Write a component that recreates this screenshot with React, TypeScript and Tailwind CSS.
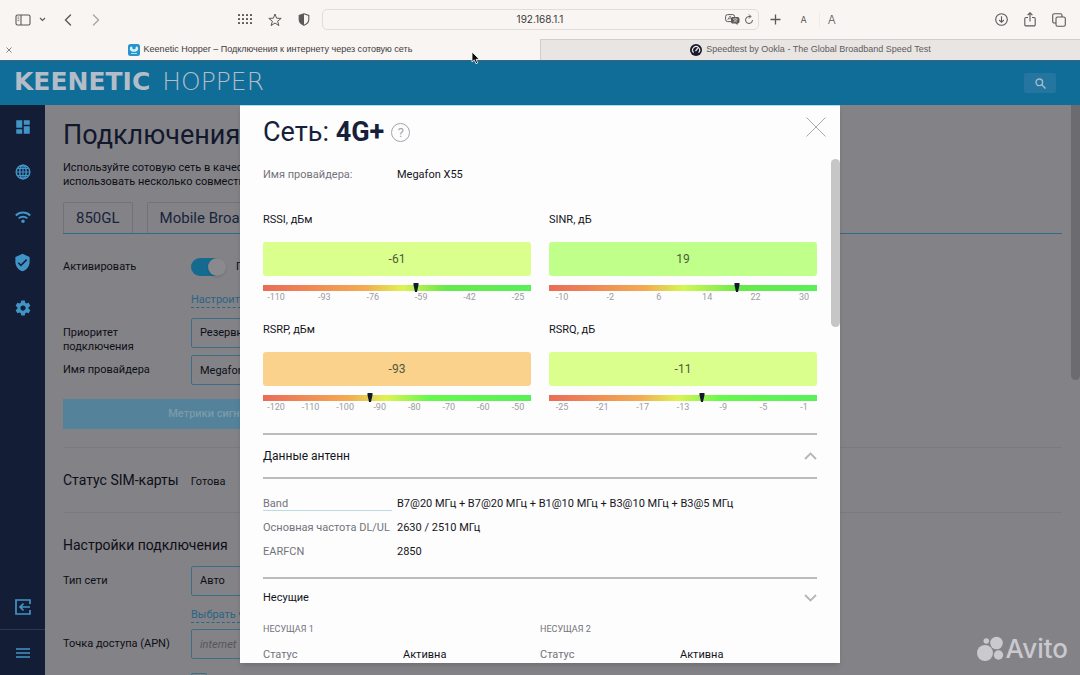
import React from 'react';

interface Metric {
  name: string;
  value: string;
  tone: string;
  marker: number;
  ticks: string[];
  scale: string;
}

const metrics: Metric[] = [
  {
    name: 'RSSI, дБм',
    value: '-61',
    tone: 'bg-[#dbff8c]',
    marker: 57,
    ticks: ['-110', '-93', '-76', '-59', '-42', '-25'],
    scale: 'bg-[linear-gradient(90deg,#ea6b57_0%,#f3ab52_38%,#dff254_52%,#67e84c_68%,#58f058_100%)]',
  },
  {
    name: 'SINR, дБ',
    value: '19',
    tone: 'bg-[#c0ff89]',
    marker: 70,
    ticks: ['-10', '-2', '6', '14', '22', '30'],
    scale: 'bg-[linear-gradient(90deg,#ea6b57_0%,#f3ab52_36%,#d3f752_50%,#67e84c_72%,#58f058_100%)]',
  },
  {
    name: 'RSRP, дБм',
    value: '-93',
    tone: 'bg-[#fbd28c]',
    marker: 40,
    ticks: ['-120', '-110', '-100', '-90', '-80', '-70', '-60', '-50'],
    scale: 'bg-[linear-gradient(90deg,#ea6b57_0%,#f3ab52_32%,#dff254_46%,#67f84c_62%,#58f058_100%)]',
  },
  {
    name: 'RSRQ, дБ',
    value: '-11',
    tone: 'bg-[#dbff8c]',
    marker: 57,
    ticks: ['-25', '-21', '-17', '-13', '-9', '-5', '-1'],
    scale: 'bg-[linear-gradient(90deg,#ea6b57_0%,#f3ab52_34%,#dff254_48%,#67f84c_64%,#58f058_100%)]',
  },
];

const antenna = [
  { label: 'Band', value: 'B7@20 МГц + B7@20 МГц + B1@10 МГц + B3@10 МГц + B3@5 МГц', hint: true },
  { label: 'Основная частота DL/UL', value: '2630 / 2510 МГц', hint: false },
  { label: 'EARFCN', value: '2850', hint: false },
];

const iconButton = 'flex shrink-0 items-center justify-center';
const field =
  'block h-[30px] w-full appearance-none rounded-[2px] border border-[#3c6f87] bg-transparent px-2 text-[11px] text-[#0d0e16]';

const BrowserToolbar: React.FC = () => (
  <div className="grid h-[39px] grid-cols-[1fr_437px_1fr] items-center text-[#5b5858]">
    <div className="flex items-center justify-between pr-3 pl-[15px]">
      <div className="flex items-center">
        <button aria-label="Боковая панель" className={iconButton}>
          <svg width="16" height="12" viewBox="0 0 16 12" fill="none" stroke="currentColor">
            <rect x="1" y="1" width="14" height="10" rx="1.5" strokeWidth="1.1" />
            <path d="M6 1v10" strokeWidth="1.1" />
            <path d="M2.5 3h1.8M2.5 4.8h1.8M2.5 6.6h1.8" strokeWidth=".7" />
          </svg>
        </button>
        <button aria-label="Группы вкладок" className={`${iconButton} ml-2`}>
          <svg width="7" height="5" viewBox="0 0 7 5" fill="none" stroke="currentColor" strokeWidth="1.1">
            <path d="M1 1l2.5 2.5L6 1" />
          </svg>
        </button>
        <button aria-label="Назад" className={`${iconButton} ml-[18px]`}>
          <svg width="8" height="12" viewBox="0 0 8 12" fill="none" stroke="currentColor" strokeWidth="1.4" strokeLinecap="round">
            <path d="M6.5 1L1.5 6l5 5" />
          </svg>
        </button>
        <button aria-label="Вперёд" className={`${iconButton} ml-5 text-[#aaa6a5]`}>
          <svg width="8" height="12" viewBox="0 0 8 12" fill="none" stroke="currentColor" strokeWidth="1.4" strokeLinecap="round">
            <path d="M1.5 1l5 5-5 5" />
          </svg>
        </button>
      </div>
      <div className="flex items-center gap-4">
        <button aria-label="Начальная страница" className={iconButton}>
          <svg width="14" height="11" viewBox="0 0 14 11" fill="currentColor">
            {[0, 4, 8, 12].map(x => [0, 4, 8].map(y => <rect key={`${x}-${y}`} x={x} y={y} width="2" height="2" rx=".6" />))}
          </svg>
        </button>
        <button aria-label="Избранное" className={iconButton}>
          <svg width="14" height="14" viewBox="0 0 14 14" fill="none" stroke="currentColor" strokeWidth="1" strokeLinejoin="round">
            <path d="M7 1l1.6 4.2 4.6.2-3.6 2.8 1.3 4.4L7 10l-3.9 2.6 1.3-4.4L.8 5.4l4.6-.2z" />
          </svg>
        </button>
        <button aria-label="Отчёт о конфиденциальности" className={iconButton}>
          <svg width="12" height="13" viewBox="0 0 12 13">
            <path d="M6 .8l4.8 1.7v4c0 2.6-2 4.6-4.8 5.8C3.2 11.1 1.2 9.1 1.2 6.5v-4z" fill="none" stroke="currentColor" strokeWidth="1.1" />
            <path d="M6 .8L1.2 2.5v4c0 2.6 2 4.6 4.8 5.8z" fill="currentColor" />
          </svg>
        </button>
      </div>
    </div>
    <div className="relative flex h-[21px] items-center rounded-[5px] border border-[#e2dddb] px-1">
      <input
        aria-label="Адрес"
        defaultValue="192.168.1.1"
        className="w-full min-w-0 bg-transparent text-center text-[10px] text-[#3a3838] outline-none"
      />
      <div className="absolute right-1 flex items-center gap-1">
        <button aria-label="Перевести" className={iconButton}>
          <svg width="15" height="11" viewBox="0 0 15 11">
            <rect x=".6" y=".6" width="9" height="7" rx="2" fill="none" stroke="currentColor" />
            <path d="M2.6 6L5 2l2 4M3.5 4.7h3" fill="none" stroke="currentColor" strokeWidth=".7" />
            <path d="M7.5 3h5a2 2 0 012 2v2.5a2 2 0 01-2 2v1.5l-2-1.5h-3a1.500 1.500 0 01-1.500-1.500V4.500A1.500 1.500 0 017.500 3z" fill="currentColor" />
            <path d="M8 5h4.500M10.200 4v1M12 5c-.6 1.600-2 2.500-3.500 3M8.800 5.500c.8 1.200 2 2 3.200 2.500" fill="none" stroke="#f9f5f2" strokeWidth=".6" />
          </svg>
        </button>
        <button aria-label="Обновить" className={iconButton}>
          <svg width="10" height="11" viewBox="0 0 10 11" fill="none" stroke="currentColor" strokeWidth="1">
            <path d="M8.500 6A3.500 3.500 0 115 2.500h1.500M5 .5l2 2-2 2" />
          </svg>
        </button>
      </div>
    </div>
    <div className="flex items-center justify-between pr-[14px] pl-[11px]">
      <div className="flex items-center">
        <button aria-label="Новая вкладка" className={iconButton}>
          <svg width="11" height="11" viewBox="0 0 11 11" stroke="currentColor" strokeWidth="1.3">
            <path d="M5.500 .5v10M.5 5.500h10" />
          </svg>
        </button>
        <button className="ml-5 text-[9px]">A</button>
        <span className="ml-3 h-4 w-px bg-[#efebe8]" />
        <button className="ml-2 text-[12px] font-light">A</button>
      </div>
      <div className="flex items-center gap-4">
        <button aria-label="Загрузки" className={iconButton}>
          <svg width="13" height="13" viewBox="0 0 13 13" fill="none" stroke="currentColor" strokeWidth="1.1">
            <circle cx="6.5" cy="6.5" r="5.8" />
            <path d="M6.500 3.200v6M4.200 7l2.300 2.300L8.800 7" />
          </svg>
        </button>
        <button aria-label="Поделиться" className={iconButton}>
          <svg width="12" height="15" viewBox="0 0 12 15" fill="none" stroke="currentColor" strokeWidth="1.1">
            <path d="M4 5.500H2A1.200 1.200 0 00.8 6.700v6A1.200 1.200 0 002 13.900h8a1.200 1.200 0 001.200-1.200v-6A1.200 1.200 0 0010 5.500H8M6 9.500V1M3.600 3.200L6 .8l2.400 2.400" />
          </svg>
        </button>
        <button aria-label="Обзор вкладок" className={iconButton}>
          <svg width="14" height="14" viewBox="0 0 14 14" fill="none" stroke="currentColor" strokeWidth="1.1">
            <rect x="4" y="4" width="9.3" height="9.3" rx="1.5" />
            <path d="M4 10H2.200A1.500 1.500 0 01.7 8.500V2.200A1.500 1.500 0 012.200.7h6.300A1.500 1.500 0 0110 2.200V4" />
          </svg>
        </button>
      </div>
    </div>
  </div>
);

const BrowserTabs: React.FC = () => (
  <div className="grid h-[21px] grid-cols-2 font-['Liberation_Sans',sans-serif] text-[9px]">
    <div className="relative flex items-center justify-center gap-1 text-[#3f3c3c]">
      <button aria-label="Закрыть вкладку" className="absolute left-[6px] text-[#7a7675]">
        <svg width="6" height="6" viewBox="0 0 6 6" stroke="currentColor" strokeWidth=".9">
          <path d="M.5 .5l5 5M5.500 .5l-5 5" />
        </svg>
      </button>
      <svg width="12" height="12" viewBox="0 0 12 12">
        <rect width="12" height="12" rx="2.5" fill="#2795cc" />
        <path d="M2 3.500c1-1.800 2.400-1 2.400.3 0 1 .7 1.500 1.600 1.500s1.600-.5 1.600-1.500c0-1.300 1.400-2.100 2.400-.3.600 2-.5 3.700-2.300 4.200H4.300C2.500 7.200 1.400 5.500 2 3.500z" fill="#d4f0fb" />
        <path d="M3 9.500h6" stroke="#a9def4" />
      </svg>
      <span>Keenetic Hopper – Подключения к интернету через сотовую сеть</span>
    </div>
    <div className="flex items-center justify-center gap-1 border-t border-l border-[#d2cecb] bg-[#e9e5e3] text-[#5f5c5b]">
      <svg width="12" height="12" viewBox="0 0 12 12">
        <circle cx="6" cy="6" r="6" fill="#181a2c" />
        <path d="M3.600 8.600a3.500 3.500 0 115 0" fill="none" stroke="#e9e5e3" strokeWidth="1.2" />
        <path d="M5.500 7L8 4" stroke="#e9e5e3" strokeWidth="1.2" />
      </svg>
      <span>Speedtest by Ookla - The Global Broadband Speed Test</span>
    </div>
  </div>
);

const Sidebar: React.FC = () => (
  <nav className="flex w-[45px] shrink-0 flex-col justify-between bg-[#131d36] text-[#4194c6]">
    <div className="flex flex-col items-center gap-[27px] pt-[13px]">
      <a href="#dashboard" aria-label="Системный монитор">
        <svg width="18" height="18" viewBox="0 0 24 24" fill="currentColor">
          <path d="M3 13h8V3H3v10zm0 8h8v-6H3v6zm10 0h8V11h-8v10zm0-18v6h8V3h-8z" />
        </svg>
      </a>
      <a href="#internet" aria-label="Интернет">
        <svg width="18" height="18" viewBox="0 0 18 18" fill="none" stroke="currentColor" strokeWidth="1.5">
          <circle cx="9" cy="9" r="6.8" />
          <ellipse cx="9" cy="9" rx="3.2" ry="6.8" />
          <path d="M9 2v14M2 9h14M3.200 5.500h11.600M3.200 12.500h11.600" strokeWidth="1.2" />
        </svg>
      </a>
      <a href="#wifi" aria-label="Мои сети и Wi-Fi">
        <svg width="18" height="18" viewBox="0 0 18 18" fill="none" stroke="currentColor" strokeWidth="2">
          <path d="M1.800 7.500c4-4 10.400-4 14.400 0M4.700 10.400c2.400-2.300 6.200-2.300 8.600 0" />
          <circle cx="9" cy="13.3" r="1.7" fill="currentColor" stroke="none" />
        </svg>
      </a>
      <a href="#security" aria-label="Сетевые правила">
        <svg width="19" height="19" viewBox="0 0 24 24" fill="currentColor">
          <path d="M12 1L3 5v6c0 5.550 3.840 10.740 9 12 5.160-1.260 9-6.450 9-12V5l-9-4zm-2 16l-4-4 1.410-1.410L10 14.170l6.590-6.590L18 9l-8 8z" />
        </svg>
      </a>
      <a href="#management" aria-label="Управление">
        <svg width="18" height="18" viewBox="0 0 24 24" fill="currentColor">
          <path d="M19.430 12.980c.04-.32.07-.64.07-.98s-.03-.66-.07-.98l2.110-1.650c.19-.15.24-.42.12-.64l-2-3.460c-.12-.22-.39-.3-.61-.22l-2.490 1c-.52-.4-1.080-.73-1.690-.98l-.38-2.650A.49.49 0 0014 2h-4c-.25 0-.46.18-.49.42l-.38 2.650c-.61.25-1.170.59-1.690.98l-2.490-1c-.23-.09-.49 0-.61.22l-2 3.460c-.13.22-.07.49.12.64l2.110 1.650c-.04.32-.07.65-.07.98s.03.66.07.98l-2.110 1.650c-.19.15-.24.42-.12.64l2 3.460c.12.22.39.3.61.22l2.490-1c.52.4 1.080.73 1.690.98l.38 2.650c.03.24.24.42.49.42h4c.25 0 .46-.18.49-.42l.38-2.650c.61-.25 1.170-.59 1.690-.98l2.490 1c.23.09.49 0 .61-.22l2-3.460c.12-.22.07-.49-.12-.64l-2.110-1.650zM12 15.500c-1.930 0-3.500-1.570-3.500-3.500s1.570-3.500 3.500-3.500 3.500 1.570 3.500 3.500-1.570 3.500-3.500 3.500z" />
        </svg>
      </a>
    </div>
    <div className="flex flex-col">
      <a href="#logout" aria-label="Выход" className="flex h-[45px] items-center justify-center border-b border-[#26394f]">
        <svg width="16" height="16" viewBox="0 0 16 16" fill="none" stroke="currentColor" strokeWidth="1.7">
          <path d="M15 5V1H1v14h14v-4M15 8H5.500M8.500 4.500L5 8l3.500 3.500" />
        </svg>
      </a>
      <button aria-label="Меню" className="flex h-[45px] items-center justify-center">
        <svg width="14" height="10" viewBox="0 0 14 10" stroke="currentColor" strokeWidth="1.5">
          <path d="M0 1h14M0 5h14M0 9h14" />
        </svg>
      </button>
    </div>
  </nav>
);

const ConnectionPage: React.FC = () => (
  <main className="min-w-0 flex-1 overflow-hidden bg-[#838287] px-[18px] text-[11px] leading-[14px] text-[#0d0e16]">
    <h1 className="pt-3 text-[27px] leading-9 whitespace-nowrap text-[#11182c]">Подключения</h1>
    <p className="mt-2 whitespace-nowrap">
      Используйте сотовую сеть в качестве
      <br />
      использовать несколько совместимых
    </p>

    <div className="mt-3 flex h-[33px] gap-[14px] border-b border-[#2f6c8c] pt-[1px] text-[15px] text-[#18243c]">
      <button className="rounded-t-[2px] border border-b-0 border-[#6f737d] px-3">850GL</button>
      <button className="rounded-t-[2px] border border-b-0 border-[#6f737d] px-3">Mobile Broadband</button>
    </div>

    <div className="mt-[19px] flex items-center">
      <label htmlFor="activate" className="w-32">Активировать</label>
      <span className="relative flex h-[28px] w-[45px] items-center">
        <input id="activate" type="checkbox" defaultChecked className="peer h-[18px] w-[34px] appearance-none rounded-full bg-[#156a90]" />
        <span className="pointer-events-none absolute left-[17px] h-[18px] w-[18px] rounded-full bg-[#8a898e] shadow" />
      </span>
      <span>Подключено</span>
    </div>
    <a href="#schedule" className="mt-3 ml-32 inline-block border-b border-dashed border-[#2b6584] text-[#2b6584]">
      Настроить
    </a>

    <div className="mt-[10px] flex w-[300px] items-start">
      <label htmlFor="priority" className="w-32 pt-2 pr-8">Приоритет подключения</label>
      <div className="flex-1">
        <select id="priority" className={field}>
          <option>Резервное</option>
        </select>
      </div>
    </div>
    <div className="mt-[1px] flex w-[300px] items-center">
      <label htmlFor="provider" className="w-32">Имя провайдера</label>
      <div className="flex-1">
        <input id="provider" defaultValue="Megafon X55" className={field} />
      </div>
    </div>
    <button className="mt-[14px] h-[30px] w-[300px] bg-[#53829a] text-[11px] font-medium text-[#7b9aac]">Метрики сигнала</button>

    <section className="mt-[18px] flex items-baseline gap-3 border-t border-[#7b7a80] pt-[25px]">
      <h2 className="text-[14px]">Статус SIM-карты</h2>
      <span>Готова</span>
    </section>

    <section className="mt-[23px] border-t border-[#7b7a80] pt-[25px]">
      <h2 className="text-[14px]">Настройки подключения</h2>
      <div className="mt-[14px] flex w-[300px] items-center">
        <label htmlFor="network" className="w-32">Тип сети</label>
        <div className="flex-1">
          <select id="network" className={field}>
            <option>Авто</option>
          </select>
        </div>
      </div>
      <a href="#bands" className="mt-3 ml-32 inline-block border-b border-dashed border-[#2b6584] text-[#2b6584]">
        Выбрать частоты
      </a>
      <div className="mt-[6px] flex w-[300px] items-center">
        <label htmlFor="apn" className="w-32">Точка доступа (APN)</label>
        <div className="flex-1">
          <input id="apn" placeholder="internet" className={`${field} placeholder:text-[#56555c] placeholder:italic`} />
        </div>
      </div>
      <input type="checkbox" aria-label="Роуминг" className="mt-[14px] ml-32 block h-4 w-4 appearance-none rounded-[2px] border border-[#3c6f87]" />
    </section>
  </main>
);

const MetricGauge: React.FC<{ metric: Metric }> = ({ metric }) => (
  <div className="flex flex-col">
    <h3 className="text-[11px] leading-4">{metric.name}</h3>
    <div className={`mt-[14px] flex h-[34px] items-center justify-center rounded-[3px] text-[12px] text-[#4f5a3f] ${metric.tone}`}>
      {metric.value}
    </div>
    <div className={`relative mt-[9px] h-[6px] ${metric.scale}`}>
      <svg
        className="absolute -top-[2px] -translate-x-1/2"
        style={{ left: `${metric.marker}%` }}
        width="6"
        height="9"
        viewBox="0 0 6 9"
      >
        <path d="M.5 0h5v2L4 9H2L.5 2z" fill="#121a2c" />
      </svg>
    </div>
    <div className="flex justify-between text-[9px] leading-[12px] text-[#9b9b9f]">
      {metric.ticks.map(tick => (
        <span key={tick} className="w-[26px] text-center">{tick}</span>
      ))}
    </div>
  </div>
);

const SignalDialog: React.FC = () => (
  <div
    role="dialog"
    aria-label="Сеть: 4G+"
    className="relative mx-auto h-full w-[600px] overflow-hidden border-t border-[#a9def4] bg-[#fdfdfd] px-[23px] text-[11px] leading-4 text-[#14151c] shadow-md"
  >
    <div className="flex items-start justify-between">
      <h1 className="flex items-center gap-[7px] pt-[8px] text-[27px] leading-9 text-[#17203a]">
        <span>Сеть: <b>4G+</b></span>
        <button aria-label="Справка" className="flex h-[19px] w-[19px] items-center justify-center rounded-full border border-[#a5a5a9] text-[13px] leading-none text-[#a5a5a9]">
          ?
        </button>
      </h1>
      <button aria-label="Закрыть" className="-mr-[9px] pt-[11px]">
        <svg width="20" height="20" viewBox="0 0 20 20" stroke="#a9a9ac" strokeWidth="1">
          <path d="M.5 .5l19 19M19.500 .5l-19 19" />
        </svg>
      </button>
    </div>
    <span className="absolute top-[53px] right-0 h-[168px] w-[9px] rounded-full bg-[#c6c6c6]" />

    <dl className="mt-[17px] flex">
      <dt className="w-[134px] text-[#73737c]">Имя провайдера:</dt>
      <dd>Megafon X55</dd>
    </dl>

    <div className="mt-[29px] grid grid-cols-2 gap-x-[18px] gap-y-[19px]">
      {metrics.map(metric => (
        <MetricGauge key={metric.name} metric={metric} />
      ))}
    </div>

    <section className="mt-[20px] border-t-2 border-[#bcbcbe]">
      <button className="flex h-[42px] w-full items-center justify-between text-[12px]">
        <span>Данные антенн</span>
        <svg width="13" height="8" viewBox="0 0 13 8" fill="none" stroke="#b5b5b8" strokeWidth="1.8">
          <path d="M1 7l5.500-5.500L12 7" />
        </svg>
      </button>
      <dl className="flex flex-col gap-2 border-t-2 border-[#bcbcbe] pt-[17px] pb-[17px]">
        {antenna.map(row => (
          <div key={row.label} className="flex">
            <dt className="w-[134px] shrink-0 pr-[5px] whitespace-nowrap text-[#73737c]">
              {row.hint ? <span className="block h-[15px] border-b border-[#bcd9e6]">{row.label}</span> : row.label}
            </dt>
            <dd>{row.value}</dd>
          </div>
        ))}
      </dl>
    </section>

    <section className="border-t-2 border-[#bcbcbe]">
      <button className="flex h-[38px] w-full items-center justify-between text-[11px]">
        <span>Несущие</span>
        <svg width="13" height="8" viewBox="0 0 13 8" fill="none" stroke="#b5b5b8" strokeWidth="1.8">
          <path d="M1 1l5.500 5.500L12 1" />
        </svg>
      </button>
      <div className="grid grid-cols-2">
        {['НЕСУЩАЯ 1', 'НЕСУЩАЯ 2'].map(title => (
          <div key={title} className="pt-1">
            <h4 className="text-[9px] text-[#73737c]">{title}</h4>
            <dl className="mt-[10px] flex">
              <dt className="w-[140px] text-[#73737c]">Статус</dt>
              <dd>Активна</dd>
            </dl>
          </div>
        ))}
      </div>
    </section>
  </div>
);

const App: React.FC = () => (
  <div className="relative flex h-screen flex-col overflow-hidden bg-[#838287] font-['Roboto',sans-serif]">
    {/* Окно браузера */}
    <div className="shrink-0 bg-[#f9f5f2] font-['Inter',sans-serif]">
      <BrowserToolbar />
      <BrowserTabs />
    </div>

    <header className="flex h-[45px] shrink-0 items-center justify-between border-t border-[#40617a] bg-[#0f6d98] pr-6 pl-[14px]">
      <div className="flex items-baseline gap-3 pb-[3px] font-['DejaVu_Sans',sans-serif] text-[25px] leading-none text-[#b4bdc7]">
        <span className="font-bold">KEENETIC</span>
        <span className="font-extralight">HOPPER</span>
      </div>
      <button aria-label="Поиск" className="flex h-[20px] w-8 items-center justify-center rounded-[2px] bg-[#2475a0]">
        <svg width="11" height="11" viewBox="0 0 11 11" fill="none" stroke="#a3bccd" strokeWidth="1.4">
          <circle cx="4.3" cy="4.3" r="3.3" />
          <path d="M6.800 6.800l3.700 3.700" />
        </svg>
      </button>
    </header>

    <div className="relative flex min-h-0 flex-1">
      <Sidebar />
      <ConnectionPage />
      <div className="absolute top-0 right-0 h-[275px] w-[9px] rounded-b-full bg-[#6c6b70]" />
      <div className="absolute inset-x-0 top-0 bottom-3">
        <SignalDialog />
      </div>
    </div>

    {/* Указатель мыши */}
    <svg className="absolute top-[51px] left-[471px]" width="9" height="14" viewBox="0 0 9 14">
      <path d="M1 1v10l2.300-2.100L5 12.800l1.700-.8-1.600-3.700H8.300z" fill="#0b0b0b" stroke="#fff" strokeWidth=".8" />
    </svg>

    <div className="absolute right-3 bottom-[10px] flex items-center gap-[2px] text-[#cac9ce]">
      <svg width="27" height="26" viewBox="0 0 27 26" fill="currentColor">
        <circle cx="8" cy="17" r="8" />
        <circle cx="19.5" cy="7" r="6.3" />
        <circle cx="9.3" cy="5" r="2.8" />
        <circle cx="21.5" cy="19" r="4.7" />
      </svg>
      <span className="font-['Inter',sans-serif] text-[26px] leading-8 font-medium">Avito</span>
    </div>
  </div>
);

export default App;
